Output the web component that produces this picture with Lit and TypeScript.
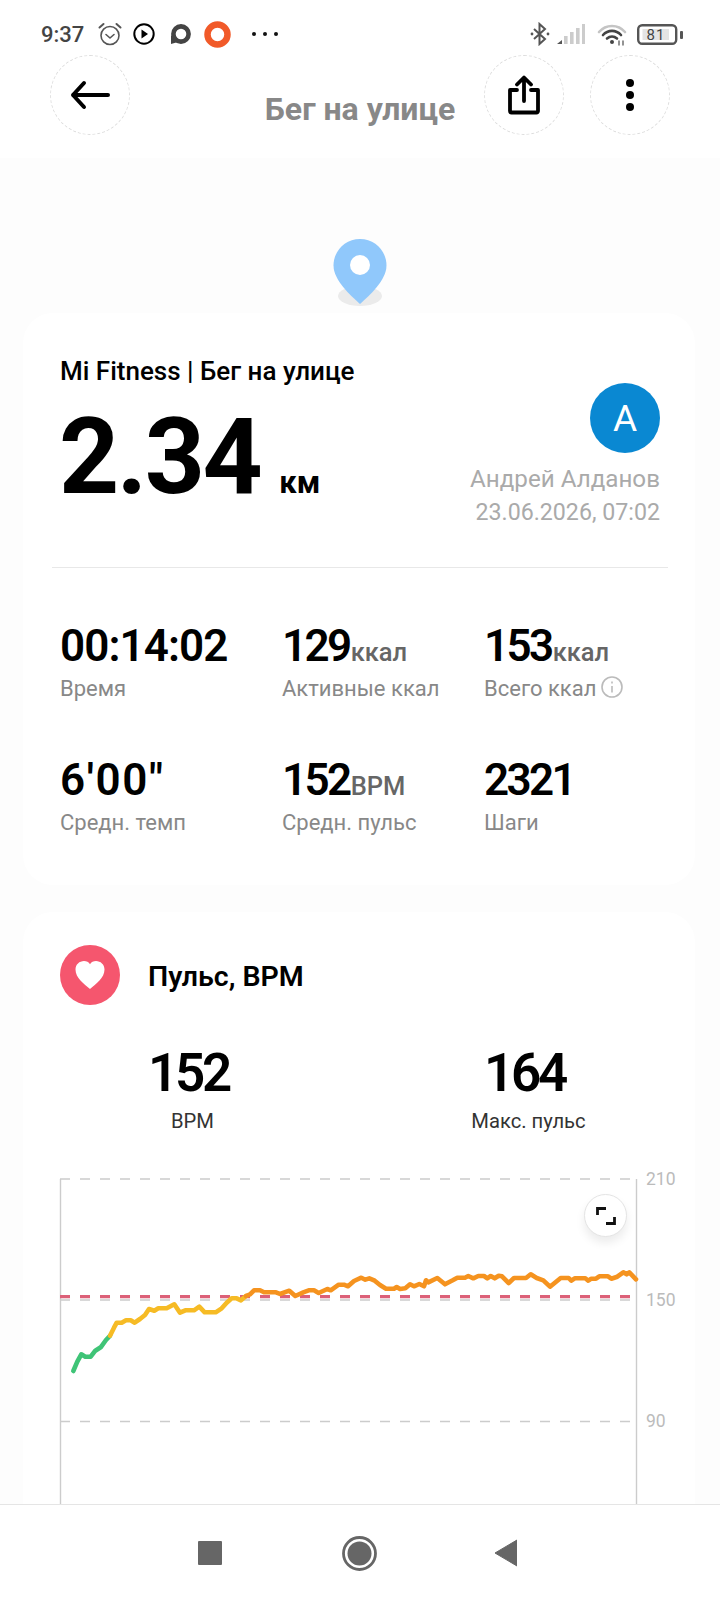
import { LitElement, html, css, svg } from 'lit';
import { customElement } from 'lit/decorators.js';

const GREEN = [[100,633],[112,605],[124,583],[136,590],[152,590],[166,572],[182,562],[198,540],[210,527]];
const YELLOW = [[210,527],[222,503],[230,488],[245,488],[258,481],[272,481],[284,488],[300,477],[315,465],[327,447],[343,452],[355,445],[380,445],[403,433],[420,458],[436,451],[462,451],[478,440],[494,457],[527,457],[545,445],[560,428],[575,415],[590,415],[603,421],[618,408]];
const ORANGE_A = [[618,408],[630,403],[642,391],[660,391],[672,397],[708,397],[720,402],[748,392],[766,408],[790,397],[806,391],[822,391],[836,399],[862,387],[872,391],[896,374],[912,374],[924,379],[942,363],[964,353],[976,359],[988,355],[1004,362],[1020,375]];
const ORANGE_B = [[18,386],[42,386],[50,381],[60,387],[76,385],[90,373],[102,379],[118,372],[132,379],[138,361],[145,367],[172,354],[195,373],[218,361],[232,353],[255,353],[265,348],[280,355],[295,348],[312,348],[322,355],[332,348],[344,355],[356,347],[366,349],[386,369],[402,354],[438,354],[452,343],[470,354],[490,361],[510,380],[542,354],[566,354],[574,362],[584,355],[616,355],[625,362],[634,356],[648,356],[658,349],[684,349],[694,356],[712,350],[730,337],[740,343],[748,337],[768,358]];

// chart svg starts at x=40, y=1160 on the page
const ptsA = (a: number[][]) => a.map(([x, y]) => `${(x / 3).toFixed(1)},${(y / 3).toFixed(1)}`);
const ptsB = (a: number[][]) => a.map(([x, y]) => `${(340 + x / 3).toFixed(1)},${(y / 3).toFixed(1)}`);

const STATS = [
  { value: '00:14:02', unit: '', label: 'Время', cls: 'clock' },
  { value: '129', unit: 'ккал', label: 'Активные ккал', cls: 'tight' },
  { value: '153', unit: 'ккал', label: 'Всего ккал', cls: 'tight', info: true },
  { value: `6'00"`, unit: '', label: 'Средн. темп', cls: 'pace' },
  { value: '152', unit: 'BPM', label: 'Средн. пульс', cls: 'tight' },
  { value: '2321', unit: '', label: 'Шаги', cls: 'tight' },
];

@customElement('app-root')
export class AppRoot extends LitElement {
  static styles = css`
    :host {
      display: flex;
      flex-direction: column;
      width: 720px;
      height: 1600px;
      overflow: hidden;
      background: #fdfdfd;
      font-family: Roboto, 'Noto Sans', sans-serif;
      color: #000;
    }
    .top {
      flex: none;
      background: #fff;
    }
    .status {
      height: 55px;
      display: flex;
      align-items: center;
      padding: 13px 37px 0 41px;
      box-sizing: border-box;
      gap: 12px;
    }
    .time {
      font-size: 22px;
      font-weight: 500;
      color: #444;
      margin-right: 2px;
    }
    .status svg {
      display: block;
      flex: none;
    }
    .spacer {
      flex: 1;
    }
    .toolbar {
      height: 103px;
      display: grid;
      grid-template-columns: 1fr auto 1fr;
      padding: 0 50px;
      box-sizing: border-box;
    }
    .actions {
      display: flex;
      justify-content: flex-end;
      gap: 26px;
    }
    .round {
      width: 80px;
      height: 80px;
      box-sizing: border-box;
      border: 1px dashed #ddd;
      border-radius: 50%;
      display: flex;
      align-items: center;
      justify-content: center;
    }
    .page-title {
      font-size: 32px;
      font-weight: 700;
      color: #888;
      line-height: 36px;
      margin-top: 36px;
    }
    .content {
      flex: 1;
      min-height: 0;
      overflow: hidden;
    }
    .pin {
      display: block;
      margin: 81px auto 7px;
    }
    .card {
      background: #fff;
      border-radius: 30px;
      width: 672px;
      margin-left: 23px;
      box-sizing: border-box;
    }
    .summary {
      height: 572px;
      padding: 44px 35px 0 37px;
    }
    .summary-title {
      font-size: 26px;
      font-weight: 500;
      line-height: 28px;
    }
    .headline {
      display: flex;
      justify-content: space-between;
      height: 182px;
    }
    .distance {
      display: flex;
      align-items: baseline;
      margin-top: 13px;
      height: 120px;
    }
    .distance b {
      font-size: 105px;
      line-height: 120px;
      font-weight: 700;
      letter-spacing: -2.5px;
      margin-left: -1px;
    }
    .distance span {
      font-size: 31px;
      font-weight: 700;
      margin-left: 19px;
    }
    .owner {
      display: flex;
      flex-direction: column;
      align-items: flex-end;
      color: #aaa;
      font-size: 24.2px;
      line-height: 33px;
      margin-top: -2px;
    }
    .owner .date {
      font-size: 23.2px;
    }
    .avatar {
      width: 70px;
      height: 70px;
      border-radius: 50%;
      background: #0a88d2;
      color: #fff;
      font-size: 37px;
      display: flex;
      align-items: center;
      justify-content: center;
      margin-bottom: 10px;
    }
    .divider {
      height: 1px;
      background: #e8e8e8;
      margin: 0 -8px;
    }
    .grid {
      display: grid;
      grid-template-columns: 222px 202px 1fr;
      grid-auto-rows: 134px;
      padding-top: 52px;
    }
    .value {
      font-size: 44px;
      font-weight: 600;
      line-height: 52px;
      white-space: nowrap;
    }
    .value.clock { letter-spacing: -0.9px; }
    .value.tight { letter-spacing: -2.6px; }
    .value.pace { letter-spacing: 1.6px; }
    .value span {
      font-size: 25.5px;
      line-height: 1;
      font-weight: 500;
      color: #666;
      letter-spacing: 0;
      margin-left: 1px;
    }
    .label {
      font-size: 22px;
      line-height: 28px;
      color: #888;
      margin-top: 3px;
      display: flex;
      align-items: center;
      gap: 5px;
      white-space: nowrap;
    }
    .pulse {
      margin-top: 27px;
      padding: 33px 37px 0;
      height: 900px;
      position: relative;
    }
    .pulse-head {
      display: flex;
      align-items: center;
      gap: 28px;
    }
    .heart {
      width: 60px;
      height: 60px;
      border-radius: 50%;
      background: #f5566e;
      display: flex;
      align-items: center;
      justify-content: center;
    }
    .pulse-title {
      font-size: 28.5px;
      font-weight: 600;
      padding-top: 3px;
    }
    .pulse-stats {
      display: grid;
      grid-template-columns: 336px 336px;
      margin: 37px -37px 0;
      text-align: center;
    }
    .big {
      font-size: 53px;
      line-height: 62px;
      font-weight: 600;
      letter-spacing: -3.2px;
      margin-left: -5px;
    }
    .small {
      font-size: 20.2px;
      line-height: 28px;
      color: #333;
      margin: 3px 0 0 3px;
    }
    .chart-wrap {
      position: absolute;
      left: 17px;
      top: 248px;
      width: 640px;
    }
    .chart-wrap svg {
      display: block;
    }
    .axis {
      font-family: Roboto, sans-serif;
      font-size: 17.5px;
      fill: #bbb;
    }
    .expand {
      position: absolute;
      left: 544px;
      top: 34px;
      width: 43px;
      height: 43px;
      box-sizing: border-box;
      border: 1px solid #e4e4e4;
      border-radius: 50%;
      background: #fff;
      box-shadow: 0 6px 10px rgba(0, 0, 0, 0.08);
      display: flex;
      align-items: center;
      justify-content: center;
    }
    .nav {
      flex: none;
      height: 96px;
      background: #fff;
      border-top: 1px solid #e5e5e5;
      box-sizing: border-box;
      display: grid;
      grid-template-columns: 198px 24px 120px 35px 117px 23px;
      align-items: center;
      padding-top: 1px;
    }
    .nav svg {
      display: block;
      grid-row: 1;
    }
    .nav .sq { grid-column: 2; }
    .nav .ci { grid-column: 4; }
    .nav .tr { grid-column: 6; }
  `;

  renderStatus() {
    return html`
      <div class="status">
        <span class="time">9:37</span>
        <svg width="24" height="24" viewBox="0 0 24 24" fill="none" stroke="#555" stroke-width="1.6" stroke-linecap="round" stroke-linejoin="round">
          <circle cx="12" cy="13.5" r="9"></circle>
          <path d="M8 12.5l4 3.5 4-3.5"></path>
          <path d="M1.5 5.5 5.5 2M22.5 5.5 18.5 2" stroke-width="2"></path>
        </svg>
        <svg width="22" height="22" viewBox="0 0 22 22" style="margin-left:-1px">
          <circle cx="11" cy="11" r="9.7" fill="none" stroke="#000" stroke-width="2"></circle>
          <path d="M8.5 6.5v9l6.5-4.5z" fill="#000"></path>
        </svg>
        <svg width="21" height="21" viewBox="0 0 21 21" style="margin-left:3px">
          <circle cx="11" cy="10" r="7.6" fill="none" stroke="#444" stroke-width="4.6"></circle>
          <path d="M1 11v9l7-2z" fill="#444"></path>
        </svg>
        <svg width="27" height="27" viewBox="0 0 27 27" style="margin-left:1px">
          <circle cx="13.5" cy="13.5" r="10" fill="none" stroke="#f15a29" stroke-width="6.5"></circle>
        </svg>
        <svg width="28" height="6" viewBox="0 0 28 6" style="margin-left:8px" fill="#111">
          <circle cx="3" cy="3" r="2"></circle>
          <circle cx="14" cy="3" r="2"></circle>
          <circle cx="25" cy="3" r="2"></circle>
        </svg>
        <div class="spacer"></div>
        <svg width="20" height="24" viewBox="0 0 20 24" fill="none" stroke="#555" stroke-width="2" style="margin-right:-2px">
          <path d="M4 7l11 10-5.500 5V2L15 7 4 17"></path>
          <circle cx="2" cy="12" r="1.400" fill="#555" stroke="none"></circle>
          <circle cx="18" cy="12" r="1.400" fill="#555" stroke="none"></circle>
        </svg>
        <svg width="28" height="20" viewBox="0 0 28 20" style="margin-left:-3px" fill="#ccc">
          <path d="M0 20l5-4v4z" fill="#555"></path>
          <rect x="7" y="12" width="3.600" height="8"></rect>
          <rect x="13" y="8" width="3.600" height="12"></rect>
          <rect x="19" y="4" width="3.600" height="16"></rect>
          <rect x="25" y="0" width="3" height="20"></rect>
        </svg>
        <svg width="30" height="23" viewBox="0 0 30 23" fill="none" stroke-linecap="round">
          <path d="M2 9C9 1 21 1 28 9" stroke="#c4c4c4" stroke-width="2.600"></path>
          <path d="M6 12C11 6.500 19 6.500 24 12" stroke="#444" stroke-width="2.600"></path>
          <path d="M10 15.500C13 13 17 13 20 15.500" stroke="#444" stroke-width="2.600"></path>
          <circle cx="15" cy="19" r="2" fill="#444"></circle>
          <path d="M22 18v4M26 18v4" stroke="#666" stroke-width="1.400"></path>
        </svg>
        <svg width="46" height="21" viewBox="0 0 46 21" style="margin-left:-2px">
          <rect x="1.200" y="1.200" width="38" height="18.600" rx="4" fill="#fff" stroke="#555" stroke-width="2.400"></rect>
          <rect x="5.500" y="5" width="26.500" height="11" fill="#e4e4e4"></rect>
          <rect x="43" y="7" width="3" height="8" rx="1" fill="#555"></rect>
          <text x="19" y="16" text-anchor="middle" font-size="15" fill="#444" font-family="Roboto, sans-serif" letter-spacing="1">81</text>
        </svg>
      </div>
    `;
  }

  renderToolbar() {
    return html`
      <div class="toolbar">
        <div>
          <div class="round">
            <svg width="40" height="30" viewBox="0 0 40 30" fill="none" stroke="#000" stroke-width="4" stroke-linecap="round" stroke-linejoin="round">
              <path d="M3 15h35M14 3 3 15l11 12"></path>
            </svg>
          </div>
        </div>
        <div class="page-title">Бег на улице</div>
        <div class="actions">
          <div class="round">
            <svg width="34" height="40" viewBox="0 0 34 40" fill="none" stroke="#000" stroke-width="3.800" stroke-linejoin="round" stroke-linecap="round">
              <path d="M10 15H3v21a1.500 1.500 0 0 0 1.500 1.500h25a1.500 1.500 0 0 0 1.500-1.500V15h-7"></path>
              <path d="M17 26V3M10 9.500 17 2.500l7 7"></path>
            </svg>
          </div>
          <div class="round">
            <svg width="10" height="34" viewBox="0 0 10 34" fill="#000">
              <circle cx="5" cy="5" r="4"></circle>
              <circle cx="5" cy="17" r="4"></circle>
              <circle cx="5" cy="29" r="4"></circle>
            </svg>
          </div>
        </div>
      </div>
    `;
  }

  renderSummary() {
    return html`
      <section class="card summary">
        <div class="summary-title">Mi Fitness | Бег на улице</div>
        <div class="headline">
          <div class="distance"><b>2.34</b><span>км</span></div>
          <div class="owner">
            <div class="avatar">A</div>
            <div>Андрей Алданов</div>
            <div class="date">23.06.2026, 07:02</div>
          </div>
        </div>
        <div class="divider"></div>
        <div class="grid">
          ${STATS.map(
            (s) => html`
              <div>
                <div class="value ${s.cls}">${s.value}${s.unit ? html`<span>${s.unit}</span>` : ''}</div>
                <div class="label">
                  ${s.label}
                  ${s.info
                    ? html`<svg width="22" height="22" viewBox="0 0 22 22" fill="none" stroke="#bbb" stroke-width="1.600" style="margin-top:-4px">
                        <circle cx="11" cy="11" r="10"></circle>
                        <path d="M11 10v6.500M11 5.500v2"></path>
                      </svg>`
                    : ''}
                </div>
              </div>
            `
          )}
        </div>
      </section>
    `;
  }

  renderChart() {
    const dash = '10 10';
    const lines = [19, 140, 261.5];
    return html`
      <div class="chart-wrap">
        <svg width="640" height="400" viewBox="0 0 680 400" style="width:680px;height:400px">
          <line x1="20.500" y1="19" x2="20.500" y2="400" stroke="#ccc" stroke-width="1.400"></line>
          <line x1="596.500" y1="19" x2="596.500" y2="400" stroke="#ccc" stroke-width="1.400"></line>
          ${lines.map(
            (y) => svg`<line x1="20" x2="590" y1=${y} y2=${y} stroke="#ccc" stroke-width="1.400" stroke-dasharray=${dash}></line>`
          )}
          <line x1="20" x2="590" y1="136.700" y2="136.700" stroke="#dc6078" stroke-width="3.200" stroke-dasharray=${dash}></line>
          <g fill="none" stroke-width="4.600" stroke-linejoin="round" stroke-linecap="round">
            <polyline points=${ptsA(GREEN).join(' ')} stroke="#3fc477"></polyline>
            <polyline points=${ptsA(YELLOW).join(' ')} stroke="#f6bb25"></polyline>
            <polyline points=${[...ptsA(ORANGE_A), ...ptsB(ORANGE_B)].join(' ')} stroke="#f5931f"></polyline>
          </g>
          <text class="axis" x="606" y="25">210</text>
          <text class="axis" x="606" y="146">150</text>
          <text class="axis" x="606" y="267">90</text>
        </svg>
        <div class="expand">
          <svg width="20" height="20" viewBox="0 0 20 20" fill="none" stroke="#111" stroke-width="2.800">
            <path d="M1.500 9V2.500H10M18.500 11v6.500H10"></path>
          </svg>
        </div>
      </div>
    `;
  }

  render() {
    return html`
      <div class="top">${this.renderStatus()} ${this.renderToolbar()}</div>
      <div class="content">
        <svg class="pin" width="54" height="67" viewBox="0 0 54 67">
          <ellipse cx="27" cy="57" rx="22" ry="10" fill="#ebebeb"></ellipse>
          <path d="M27 0C12 0 .5 12 .5 26.500 .5 41 17 56 27 65 37 56 53.500 41 53.500 26.500 53.500 12 42 0 27 0z" fill="#90c8fb"></path>
          <circle cx="27" cy="26" r="10" fill="#fff"></circle>
        </svg>
        ${this.renderSummary()}
        <section class="card pulse">
          <div class="pulse-head">
            <div class="heart">
              <svg width="32" height="30" viewBox="0 0 32 30">
                <path d="M16 29C10 24 1.500 18 1.500 9.500 1.500 4.500 5.500 1 10 1c2.500 0 4.800 1.200 6 3.200C17.200 2.200 19.500 1 22 1c4.500 0 8.500 3.500 8.500 8.500C30.500 18 22 24 16 29z" fill="#fff"></path>
              </svg>
            </div>
            <div class="pulse-title">Пульс, BPM</div>
          </div>
          <div class="pulse-stats">
            <div>
              <div class="big">152</div>
              <div class="small">BPM</div>
            </div>
            <div>
              <div class="big">164</div>
              <div class="small">Макс. пульс</div>
            </div>
          </div>
          ${this.renderChart()}
        </section>
      </div>
      <div class="nav">
        <svg class="sq" width="24" height="24" viewBox="0 0 24 24"><rect width="24" height="24" rx="1" fill="#666"></rect></svg>
        <svg class="ci" width="35" height="35" viewBox="0 0 35 35">
          <circle cx="17.500" cy="17.500" r="16" fill="none" stroke="#666" stroke-width="2.800"></circle>
          <circle cx="17.500" cy="17.500" r="12" fill="#666"></circle>
        </svg>
        <svg class="tr" width="23" height="28" viewBox="0 0 23 28"><path d="M23 1v26L1 14z" fill="#666" stroke="#666" stroke-linejoin="round"></path></svg>
      </div>
    `;
  }
}
